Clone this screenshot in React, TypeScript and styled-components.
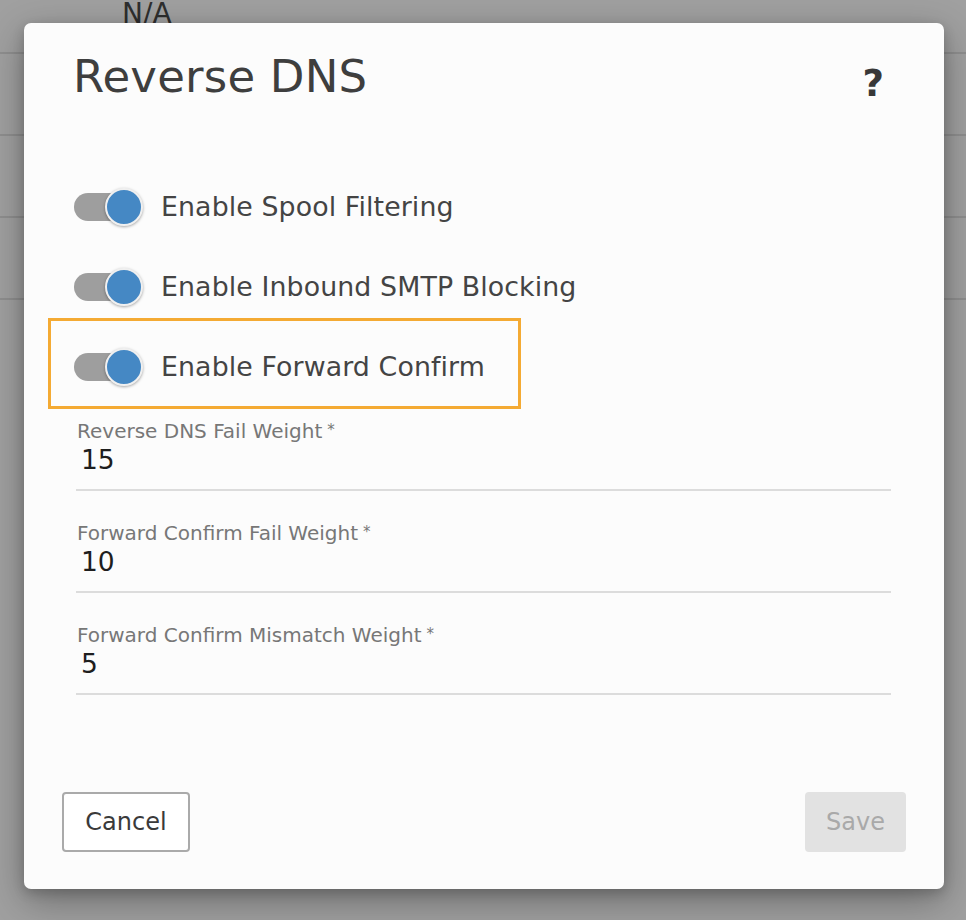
import React from "react";
import styled, { createGlobalStyle } from "styled-components";

const GlobalStyle = createGlobalStyle`
  html, body {
    margin: 0;
    padding: 0;
    width: 966px;
    height: 920px;
    overflow: hidden;
    background: #a0a0a0;
    font-family: "DejaVu Sans", "Liberation Sans", sans-serif;
  }
  *, *::before, *::after { box-sizing: border-box; }
`;

const Page = styled.div`
  position: relative;
  width: 966px;
  height: 920px;
  background: #a0a0a0;
`;

const BackTable = styled.div`
  display: flex;
  flex-direction: column;
`;

const BackRow = styled.div<{ $h: number }>`
  height: ${(p) => p.$h}px;
  border-bottom: 2px solid #8f8f8f;
  display: flex;
  align-items: flex-start;
  padding-left: 122px;
`;

const BackCell = styled.span`
  font-size: 28px;
  line-height: 28px;
  color: #2e2e2e;
`;

const Overlay = styled.div`
  position: absolute;
  inset: 0;
  padding: 23px 22px 0 24px;
`;

const Modal = styled.div`
  width: 920px;
  background: #fcfcfc;
  border-radius: 7px;
  box-shadow: 0 12px 38px rgba(0, 0, 0, 0.32), 0 4px 12px rgba(0, 0, 0, 0.18);
  padding: 27px 0 37px;
  display: flex;
  flex-direction: column;
`;

const Header = styled.div`
  display: flex;
  align-items: flex-start;
  justify-content: space-between;
  padding: 0 60px 0 49px;
`;

const Title = styled.h1`
  margin: 0;
  font-weight: normal;
  font-size: 45px;
  line-height: 54px;
  color: #3e3e3e;
  letter-spacing: 0.2px;
`;

const Help = styled.span`
  font-weight: bold;
  font-size: 37px;
  line-height: 40px;
  margin-top: 14px;
  color: #383838;
`;

const Body = styled.div`
  padding: 83px 53px 0 50px;
  display: flex;
  flex-direction: column;
`;

const Toggles = styled.div`
  display: flex;
  flex-direction: column;
  gap: 40px;
`;

const ToggleRow = styled.div<{ $highlight?: boolean }>`
  position: relative;
  display: flex;
  align-items: center;
  height: 40px;
  ${(p) =>
    p.$highlight &&
    `
    &::after {
      content: "";
      position: absolute;
      left: -26px;
      top: -29px;
      width: 473px;
      height: 91px;
      border: 3px solid #f4aa33;
      pointer-events: none;
    }
  `}
`;

const Switch = styled.span`
  position: relative;
  width: 69px;
  height: 40px;
  flex: none;
`;

const Track = styled.span`
  position: absolute;
  left: 0;
  top: 6px;
  width: 56px;
  height: 28px;
  border-radius: 14px;
  background: #9e9e9e;
`;

const Knob = styled.span`
  position: absolute;
  left: 31px;
  top: 1px;
  width: 38px;
  height: 38px;
  border-radius: 50%;
  background: #4588c4;
  border: 2px solid #f0f0f0;
  box-shadow: 0 1px 3px rgba(0, 0, 0, 0.35);
`;

const ToggleLabel = styled.span`
  margin-left: 18px;
  font-size: 26.8px;
  line-height: 32px;
  color: #444;
  letter-spacing: 0.1px;
`;

const Fields = styled.div`
  display: flex;
  flex-direction: column;
  gap: 29px;
  margin-top: 31px;
  padding-left: 2px;
`;

const Field = styled.div`
  display: flex;
  flex-direction: column;
`;

const FieldLabel = styled.label`
  font-size: 20px;
  line-height: 24px;
  color: #777;
  padding-left: 1px;
`;

const Star = styled.span`
  font-size: 15px;
  vertical-align: 3px;
  margin-left: 5px;
`;

const Value = styled.div`
  font-size: 26.5px;
  line-height: 32px;
  color: #1e1e1e;
  padding: 1px 0 13px 5px;
  border-bottom: 2px solid #dcdcdc;
`;

const Footer = styled.div`
  display: flex;
  justify-content: space-between;
  padding: 97px 38px 0 38px;
`;

const Button = styled.button<{ $variant: "outline" | "disabled" }>`
  height: 60px;
  font-family: "DejaVu Sans", "Liberation Sans", sans-serif;
  font-size: 24px;
  border-radius: 4px;
  padding: 0;
  ${(p) =>
    p.$variant === "outline"
      ? `
    width: 128px;
    background: #fff;
    border: 2px solid #aaa;
    color: #3a3a3a;
  `
      : `
    width: 101px;
    background: #e2e2e2;
    border: none;
    color: #a9a9a9;
  `}
`;

const toggles = [
  { label: "Enable Spool Filtering" },
  { label: "Enable Inbound SMTP Blocking" },
  { label: "Enable Forward Confirm", highlight: true },
];

const fields = [
  { label: "Reverse DNS Fail Weight", value: "15" },
  { label: "Forward Confirm Fail Weight", value: "10" },
  { label: "Forward Confirm Mismatch Weight", value: "5" },
];

export default function App() {
  return (
    <Page>
      <GlobalStyle />
      <BackTable>
        <BackRow $h={54}>
          <BackCell>N/A</BackCell>
        </BackRow>
        <BackRow $h={82} />
        <BackRow $h={82} />
        <BackRow $h={82} />
      </BackTable>
      <Overlay>
        <Modal>
          <Header>
            <Title>Reverse DNS</Title>
            <Help>?</Help>
          </Header>
          <Body>
            <Toggles>
              {toggles.map((t) => (
                <ToggleRow key={t.label} $highlight={t.highlight}>
                  <Switch>
                    <Track />
                    <Knob />
                  </Switch>
                  <ToggleLabel>{t.label}</ToggleLabel>
                </ToggleRow>
              ))}
            </Toggles>
            <Fields>
              {fields.map((f) => (
                <Field key={f.label}>
                  <FieldLabel>
                    {f.label}
                    <Star>*</Star>
                  </FieldLabel>
                  <Value>{f.value}</Value>
                </Field>
              ))}
            </Fields>
          </Body>
          <Footer>
            <Button $variant="outline">Cancel</Button>
            <Button $variant="disabled">Save</Button>
          </Footer>
        </Modal>
      </Overlay>
    </Page>
  );
}
